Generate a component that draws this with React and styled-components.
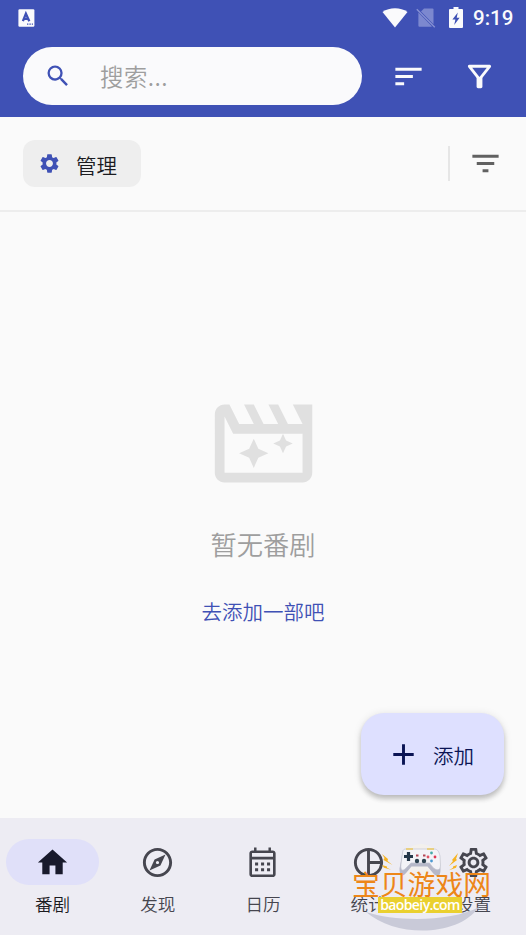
import React, { useState } from 'react';
import styled, { createGlobalStyle } from 'styled-components';
import {
  MdAdd,
  MdFilterList,
  MdHome,
  MdOutlineExplore,
  MdOutlineFilterAlt,
  MdOutlineMovieFilter,
  MdOutlineSettings,
  MdPieChartOutline,
  MdSearch,
  MdSettings,
  MdSort,
} from 'react-icons/md';

const GlobalStyle = createGlobalStyle`
  * {
    box-sizing: border-box;
  }

  body {
    margin: 0;
    font-family: 'Noto Sans CJK SC', sans-serif;
    font-weight: 350;
    background: #fafafa;
  }

  button {
    border: none;
    padding: 0;
    background: none;
    font: inherit;
    cursor: pointer;
  }

  svg {
    display: block;
    flex-shrink: 0;
  }
`;

const Screen = styled.div`
  position: relative;
  display: flex;
  flex-direction: column;
  width: 526px;
  height: 935px;
  overflow: hidden;
  background: #fafafa;
`;

const Header = styled.header`
  height: 117px;
  background: #3f51b5;
  color: #fafafc;
`;

const StatusBar = styled.div`
  display: flex;
  align-items: center;
  justify-content: space-between;
  height: 35px;
  padding: 0 12px 0 18px;
`;

const StatusIcons = styled.div`
  display: flex;
  align-items: center;
`;

const StatusGap = styled.span`
  width: ${({ $width }) => $width}px;
`;

const Clock = styled.span`
  width: 41px;
  margin-left: 10px;
  padding-top: 1px;
  font-family: Roboto, sans-serif;
  font-size: 20.5px;
  font-weight: 500;
  line-height: 35px;
`;

const SearchRow = styled.div`
  display: flex;
  align-items: center;
  padding: 12px 29px 0 23px;
`;

const SearchBox = styled.label`
  display: flex;
  align-items: center;
  width: 339px;
  height: 58px;
  padding-left: 21px;
  border-radius: 29px;
  background: #fafafc;
  color: #3f51b5;
`;

const SearchInput = styled.input`
  width: 230px;
  height: 34px;
  margin: 0 0 0 28px;
  padding: 0;
  border: none;
  outline: none;
  background: transparent;
  font: inherit;
  font-size: 23.4px;
  letter-spacing: 0.5px;
  color: #333;

  &::placeholder {
    color: #9e9e9e;
    opacity: 1;
  }
`;

const IconButton = styled.button`
  display: flex;
  margin-left: ${({ $gap }) => $gap}px;
  color: ${({ $color }) => $color || 'inherit'};
`;

const TagBar = styled.div`
  display: flex;
  align-items: center;
  height: 95px;
  padding: 0 23px;
  border-bottom: 2px solid #ededed;
`;

const ManageChip = styled.button`
  display: flex;
  align-items: center;
  gap: 15px;
  width: 118px;
  height: 47px;
  padding-left: 15px;
  border-radius: 12px;
  background: #eeeeee;
  color: #3f51b5;
`;

const ChipLabel = styled.span`
  margin-top: 2px;
  font-size: 20.5px;
  line-height: 30px;
  color: #1b1b1f;
`;

const Divider = styled.span`
  width: 2px;
  height: 35px;
  margin-left: auto;
  background: #e6e6e6;
`;

const Content = styled.main`
  position: relative;
  display: flex;
  flex: 1;
  flex-direction: column;
  align-items: center;
  padding-top: 173px;
  color: #e0e0e0;
`;

const EmptyTitle = styled.p`
  margin: 23px 0 0;
  font-size: 26.3px;
  line-height: 38px;
  color: #9e9e9e;
`;

const EmptyLink = styled.button`
  margin-top: 33px;
  font-size: 20.5px;
  line-height: 30px;
  color: #3f51b5;
`;

const AddButton = styled.button`
  position: absolute;
  right: 22px;
  bottom: 23px;
  display: flex;
  align-items: center;
  gap: 12px;
  width: 143px;
  height: 82px;
  padding-left: 25px;
  border-radius: 23px;
  background: #dee0ff;
  color: #0a1454;
  font-size: 20.5px;
  box-shadow: 0 4px 5px rgba(0, 0, 0, 0.2), 0 1px 9px rgba(0, 0, 0, 0.1);
`;

const AddLabel = styled.span`
  margin-top: 1px;
`;

const NavBar = styled.nav`
  display: grid;
  grid-template-columns: repeat(5, 1fr);
  height: 117px;
  padding-top: 21px;
  background: #edecf3;
`;

const NavItem = styled.button`
  display: flex;
  flex-direction: column;
  align-items: center;
  color: ${({ $active }) => ($active ? '#1b1b1f' : '#46464f')};
`;

const NavIndicator = styled.span`
  display: flex;
  align-items: center;
  justify-content: center;
  width: 93px;
  height: 46px;
  border-radius: 23px;
  background: ${({ $active }) => ($active ? '#e0e0f9' : 'transparent')};
  color: ${({ $active }) => ($active ? '#181a2c' : '#46464f')};
`;

const NavLabel = styled.span`
  margin-top: 6px;
  font-size: 17.6px;
  line-height: 26px;
`;

const Watermark = styled.div`
  position: absolute;
  left: 346px;
  top: 836px;
  width: 150px;
  height: 99px;
  pointer-events: none;
`;

const WatermarkArt = styled.svg`
  position: absolute;
  inset: 0;
`;

const WatermarkName = styled.div`
  position: absolute;
  left: 6px;
  top: 27px;
  font-size: 27.8px;
  font-weight: 400;
  line-height: 40px;
  white-space: nowrap;
  color: #ed8618;
`;

const WatermarkSite = styled.div`
  position: absolute;
  left: 32px;
  top: 61px;
  width: 84px;
  height: 16px;
  background: #ead02f;
  color: #fff;
  font-family: 'Open Sans', sans-serif;
  font-size: 14px;
  font-weight: 600;
  line-height: 15px;
  letter-spacing: -0.6px;
  text-align: center;
`;

const KeyboardIcon = () => (
  <svg width="17" height="18" viewBox="0 0 17 18">
    <rect x="0.4" y="0.3" width="16" height="17.4" rx="1.2" fill="#fafafc" />
    <path
      d="M4.9 12.2 7.9 4.6l3.4 7.6M6 9.8h4"
      fill="none"
      stroke="#3f51b5"
      strokeWidth="2.3"
    />
    <path d="M9 15.2h1.4m1 0h1.4m1 0h1.2" stroke="#3f51b5" strokeWidth="1.3" />
  </svg>
);

const WifiIcon = () => (
  <svg width="26" height="20" viewBox="0 0 26 20">
    <path d="M.5 4C7.5-1 18.5-1 25.5 4L13 19.5z" fill="#fafafc" />
  </svg>
);

const NoSimIcon = () => (
  <svg width="20" height="21" viewBox="0 0 20 21">
    <path d="M5 4.6 8 1.5h8.500q1 0 1 1v14.700z" fill="#7c88cf" />
    <path d="M2.400 5.600 15.800 19.200q-.3.500-1 .5H3.400q-1 0-1-1z" fill="#7c88cf" />
    <path d="M.8 2.200 18.800 20.300" stroke="#8792d3" strokeWidth="1.300" />
  </svg>
);

const BatteryIcon = () => (
  <svg width="14" height="21" viewBox="0 0 14 21">
    <path
      d="M4.500 0h5v2H13q1 0 1 1v17q0 1-1 1H1q-1 0-1-1V3q0-1 1-1h3.500z"
      fill="#fafafc"
    />
    <path d="M8.800 5.500 3.400 12.500h3l-1.200 5.500 5.400-7.200H7.700z" fill="#3f51b5" />
  </svg>
);

const CalendarIcon = ({ size }) => (
  <svg width={size} height={size} viewBox="0 0 24 24" fill="currentColor">
    <path
      fillRule="evenodd"
      d="M6.200 1.700h1.700v2h8.200v-2h1.700v2H19c1.100 0 2 .9 2 2V20c0 1.100-.9 2-2 2H5c-1.100 0-2-.9-2-2V5.700c0-1.100.9-2 2-2h1.200zM4.800 5.500V8h14.400V5.500zM4.800 9.900v10.300h14.400V9.900z"
    />
    <path d="M6.900 12h2.100v2.100H6.900zM11 12h2.100v2.100H11zM15.100 12h2.100v2.100h-2.100zM6.900 15.900h2.100V18H6.900zM11 15.900h2.100V18H11zM15.100 15.900h2.100V18h-2.100z" />
  </svg>
);

const Gamepad = () => (
  <WatermarkArt width="150" height="99" viewBox="0 0 150 99">
    <circle cx="75" cy="28" r="20" fill="#f5f2e9" opacity="0.7" />
    <path d="M20 76C50 86 105 86 133 71C112 101 50 102 20 76z" fill="#c9cad8" />
    <path
      d="M60 14h28c4 0 5 3 6 7l1 11c0 8-4 8-8 3l-5-6H66l-5 6c-4 5-7 4-7-4l2-10c1-4 0-7 4-7z"
      fill="#b6b8c8"
      transform="translate(-0.500 1.500)"
    />
    <path
      d="M60 13h28c4 0 5 3 6 7l.5 9c0 6-4 6-8 2l-3-4H65l-4 4c-4 5-7 4-6-3l1-8c1-4 0-7 4-7z"
      fill="#f3f3f7"
      stroke="#c3c4d0"
      strokeWidth="0.7"
    />
    <path d="M60 13h7M81 13h7" stroke="#e8cf81" strokeWidth="2" />
    <path d="M62.500 16v9M58 20.500h9" stroke="#253849" strokeWidth="3.200" />
    <g fill="#2c414e">
      <circle cx="71" cy="25" r="2.200" />
      <circle cx="78" cy="25" r="2.200" />
    </g>
    <path d="M70 19.500h2.500M77 19.500h2.500" stroke="#b34754" strokeWidth="1.800" />
    <circle cx="85.500" cy="17" r="1.400" fill="#46aaa7" />
    <circle cx="82" cy="21" r="1.400" fill="#df5364" />
    <circle cx="89" cy="21" r="1.400" fill="#df3650" />
    <circle cx="85.500" cy="25" r="1.400" fill="#4c99d1" />
    <g fill="#f6b323">
      <path d="m36 18 6 5-.5 2 5 4-9-5 1-2z" />
      <path d="m36 29 5 1.500v1.300l4 2-7-2z" />
      <path d="m112 17-6 7 1 1-4 5 8-6-1-1z" />
      <path d="m111 29-4 1.500v1.300l-4 2.500 7-2.500z" />
    </g>
  </WatermarkArt>
);

const tabs = [
  { label: '番剧', icon: MdHome },
  { label: '发现', icon: MdOutlineExplore },
  { label: '日历', icon: CalendarIcon },
  { label: '统计', icon: MdPieChartOutline },
  { label: '设置', icon: MdOutlineSettings },
];

const App = () => {
  const [keyword, setKeyword] = useState('');
  const [activeTab, setActiveTab] = useState(0);

  return (
    <Screen>
      <GlobalStyle />
      <Header>
        <StatusBar>
          <KeyboardIcon />
          <StatusIcons>
            <WifiIcon />
            <StatusGap $width={8} />
            <NoSimIcon />
            <StatusGap $width={13} />
            <BatteryIcon />
            <Clock>9:19</Clock>
          </StatusIcons>
        </StatusBar>
        <SearchRow>
          <SearchBox>
            <MdSearch size={28} />
            <SearchInput
              type="text"
              placeholder="搜索..."
              value={keyword}
              onChange={(e) => setKeyword(e.target.value)}
            />
          </SearchBox>
          <IconButton $gap={29} aria-label="排序">
            <MdSort size={35} />
          </IconButton>
          <IconButton $gap={36} aria-label="筛选">
            <MdOutlineFilterAlt size={35} />
          </IconButton>
        </SearchRow>
      </Header>

      <TagBar>
        <ManageChip>
          <MdSettings size={23} />
          <ChipLabel>管理</ChipLabel>
        </ManageChip>
        <Divider />
        <IconButton $gap={18} $color="#616161" aria-label="标签">
          <MdFilterList size={35} />
        </IconButton>
      </TagBar>

      <Content>
        <MdOutlineMovieFilter size={117} />
        <EmptyTitle>暂无番剧</EmptyTitle>
        <EmptyLink>去添加一部吧</EmptyLink>
        <AddButton>
          <MdAdd size={35} />
          <AddLabel>添加</AddLabel>
        </AddButton>
      </Content>

      <NavBar>
        {tabs.map(({ label, icon: Icon }, index) => (
          <NavItem
            key={label}
            $active={index === activeTab}
            onClick={() => setActiveTab(index)}
          >
            <NavIndicator $active={index === activeTab}>
              <Icon size={35} />
            </NavIndicator>
            <NavLabel>{label}</NavLabel>
          </NavItem>
        ))}
      </NavBar>

      <Watermark>
        <Gamepad />
        <WatermarkName>宝贝游戏网</WatermarkName>
        <WatermarkSite>baobeiy.com</WatermarkSite>
      </Watermark>
    </Screen>
  );
};

export default App;
